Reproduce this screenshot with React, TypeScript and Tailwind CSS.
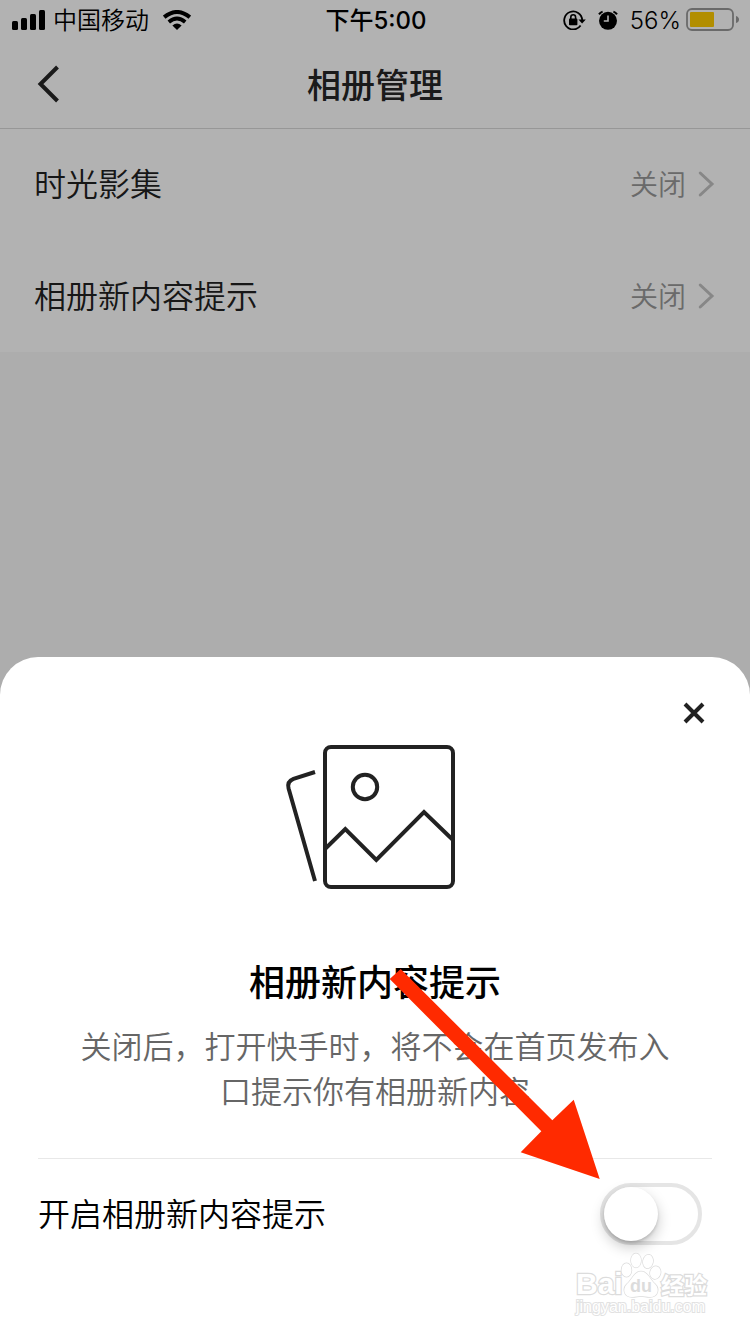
import React, { useState } from 'react';

const cjk = "font-['Noto_Sans_CJK_SC','Noto_Sans',sans-serif]";
const latin = "font-['Inter','Noto_Sans_CJK_SC',sans-serif]";

function SignalIcon() {
  return (
    <svg width="33" height="20" viewBox="0 0 33 20" aria-hidden="true">
      <rect x="0" y="11" width="6" height="9" rx="1.5" />
      <rect x="9" y="8" width="6" height="12" rx="1.5" />
      <rect x="18" y="4" width="6" height="16" rx="1.5" />
      <rect x="27" y="0" width="6" height="20" rx="1.5" />
    </svg>
  );
}

function WifiIcon() {
  return (
    <svg width="28" height="20" viewBox="0 0 28 20" aria-hidden="true">
      <path d="M1.2 7.2 Q14 -3.2 26.8 7.2" fill="none" stroke="#000" strokeWidth="4" />
      <path d="M5.8 12 Q14 5 22.2 12" fill="none" stroke="#000" strokeWidth="3.8" />
      <path d="M9.4 15.6 Q14 11.6 18.6 15.6 L14 20 Z" />
    </svg>
  );
}

function RotationLockIcon() {
  return (
    <svg width="23" height="20" viewBox="0 0 23 20" aria-hidden="true">
      <path d="M17.6 15.6 A9 9 0 1 1 19.2 10" fill="none" stroke="#000" strokeWidth="1.8" />
      <path d="M15.4 9.4 H22.8 L19.1 13.6 Z" />
      <rect x="6" y="8.6" width="8.4" height="6.6" rx="0.8" />
      <path d="M7.8 9 V7.2 A2.4 2.4 0 0 1 12.6 7.2 V9" fill="none" stroke="#000" strokeWidth="1.6" />
    </svg>
  );
}

function AlarmIcon() {
  return (
    <svg width="20" height="20" viewBox="0 0 20 20" aria-hidden="true">
      <circle cx="10" cy="10.8" r="9" />
      <path d="M1 4.4 A7 7 0 0 1 4.6 1.6" fill="none" stroke="#000" strokeWidth="2" />
      <path d="M19 4.4 A7 7 0 0 0 15.4 1.6" fill="none" stroke="#000" strokeWidth="2" />
      <path d="M10 5.4 V11 H5.8" fill="none" stroke="#fff" strokeWidth="1.6" />
    </svg>
  );
}

function BatteryIcon() {
  return (
    <svg width="54" height="24" viewBox="0 0 54 24" aria-hidden="true">
      <rect x="1" y="1" width="46" height="21" rx="5" fill="none" stroke="#999" strokeWidth="1.8" />
      <rect x="4" y="4" width="24" height="15" rx="1" fill="#fc0" />
      <path d="M50 8 Q53 9 53 11.5 Q53 14 50 15 Z" fill="#999" />
    </svg>
  );
}

function StatusBar() {
  return (
    <div className={`grid h-10 grid-cols-[1fr_auto_1fr] items-center pl-3 pr-[10px] text-2xl text-black ${latin}`}>
      <div className="flex items-center">
        <SignalIcon />
        <span className="ml-2 mr-[14px] pt-0.5 font-[350]">中国移动</span>
        <WifiIcon />
      </div>
      <time className="pt-0.5 font-medium">下午5:00</time>
      <div className="flex items-center justify-end">
        <RotationLockIcon />
        <span className="ml-3 flex">
          <AlarmIcon />
        </span>
        <span className="ml-3 mr-[5px] pt-0.5 font-[350]">56%</span>
        <BatteryIcon />
      </div>
    </div>
  );
}

function SettingRow({ label, value }: { label: string; value: string }) {
  return (
    <li>
      <button type="button" className="flex h-28 w-full items-center justify-between pl-[34px] pr-[35px] font-[350]">
        <span className="pb-1 text-[32px] text-[#222]">{label}</span>
        <span className="flex items-center gap-3 text-[28px] text-[#999]">
          <span className="pb-0.5">{value}</span>
          <svg width="17" height="28" viewBox="0 0 17 28" fill="none" aria-hidden="true">
            <path d="M2.2 3 L14 14 L2.2 25" stroke="#c2c2c2" strokeWidth="3" strokeLinecap="round" />
          </svg>
        </span>
      </button>
    </li>
  );
}

function AlbumIllustration() {
  return (
    <svg width="182" height="148" viewBox="0 0 182 148" fill="none" stroke="#222" strokeWidth="4" aria-hidden="true">
      <rect x="41" y="4" width="128" height="140" rx="6" />
      <circle cx="81" cy="44" r="12.2" />
      <path d="M41.5 105.5 L61.3 86 L92.3 117 L140 69 L169.5 97.5" />
      <path d="M31 29 L9.5 35.8 Q2.8 38.4 4.6 45.5 L31 138" />
    </svg>
  );
}

function Watermark() {
  return (
    <svg
      className="absolute bottom-3 right-[36px]"
      width="140"
      height="70"
      viewBox="0 0 140 70"
      fill="#fff"
      stroke="#dcdcdc"
      strokeWidth="1.4"
      paintOrder="stroke"
    >
      <g strokeWidth="2.4" fontWeight="700">
        <text x="2" y="42" fontFamily="Liberation Sans, sans-serif" fontSize="30">Bai</text>
        <text x="87" y="42" fontFamily="Noto Sans CJK SC, sans-serif" fontSize="23">经验</text>
      </g>
      <path d="M67 19.5 C60 19.5 58 28 53 32 C48 37 50 45 58 45 C62 45 64 44 67 44 C70 44 72 45 76 45 C84 45 86 37 81 32 C76 28 74 19.5 67 19.5 Z" />
      <ellipse cx="52.5" cy="18" rx="5" ry="6.8" />
      <ellipse cx="62" cy="8.5" rx="5" ry="7" />
      <ellipse cx="74" cy="9.5" rx="5" ry="6.8" transform="rotate(10 74 9.5)" />
      <ellipse cx="81.5" cy="20.5" rx="5.2" ry="6.4" transform="rotate(15 81 20)" />
      <text x="56" y="40" fontFamily="Liberation Sans, sans-serif" fontSize="18" fontWeight="700" fill="#dcdcdc" stroke="none">du</text>
      <text x="2" y="60" fontFamily="Liberation Sans, sans-serif" fontSize="16" stroke="#e2e2e2" strokeWidth="2">jingyan.baidu.com</text>
    </svg>
  );
}

function Arrow() {
  return (
    <svg
      className="pointer-events-none absolute bottom-[155px] right-[150px]"
      width="211"
      height="210"
      viewBox="0 0 211 210"
      aria-hidden="true"
    >
      <path d="M0.7 10 L11.7 0 L163.3 151.3 L184.7 130.7 L210.7 210 L131.7 183.3 L152.3 162.3 Z" fill="#ff2a00" />
    </svg>
  );
}

export default function App() {
  const [enabled, setEnabled] = useState(false);

  return (
    <div className={`relative flex min-h-screen flex-col bg-[#f8f8f8] ${cjk}`}>
      <header className="bg-white">
        <StatusBar />
        <div className="grid h-[88px] grid-cols-[80px_1fr_80px] items-center">
          <button type="button" aria-label="返回" className="flex h-full items-center pl-[37px]">
            <svg width="24" height="38" viewBox="0 0 24 38" fill="none" aria-hidden="true">
              <path d="M20.5 2 L3.5 19 L20.5 36" stroke="#262626" strokeWidth="4" />
            </svg>
          </button>
          <h1 className="pb-0.5 text-center text-[34px] font-medium text-[#262626]">相册管理</h1>
        </div>
      </header>
      <ul className="bg-white shadow-[inset_0_1px_0_#d8d8d8]">
        <SettingRow label="时光影集" value="关闭" />
        <SettingRow label="相册新内容提示" value="关闭" />
      </ul>

      <div className="absolute inset-0 flex flex-col justify-end bg-black/30">
        <section role="dialog" aria-labelledby="sheet-title" className="relative rounded-t-[38px] bg-white pb-16">
          <div className="flex justify-end pr-8 pt-8">
            <button type="button" aria-label="关闭" className="flex size-12 items-center justify-center">
              <svg width="22" height="22" viewBox="0 0 22 22" aria-hidden="true">
                <path d="M2 2 L20 20 M20 2 L2 20" stroke="#222" strokeWidth="4" />
              </svg>
            </button>
          </div>
          <div className="mt-[6px] flex justify-center">
            <AlbumIllustration />
          </div>
          <h2 id="sheet-title" className="mt-[62px] text-center text-[36px] font-medium leading-[54px] text-black">
            相册新内容提示
          </h2>
          <p className="mt-[15px] px-20 text-center text-[31px] font-[350] leading-[45px] text-[#666]">
            关闭后，打开快手时，将不会在首页发布入口提示你有相册新内容
          </p>
          <div className="mx-[38px] mt-[46px] border-t border-[#e8e8e8] pb-px pr-[10px]">
            <div className="flex h-[110px] items-center justify-between">
              <label htmlFor="new-content" className="pb-1 text-[32px] font-[350] text-black">
                开启相册新内容提示
              </label>
              <input
                id="new-content"
                type="checkbox"
                role="switch"
                checked={enabled}
                onChange={(e) => setEnabled(e.target.checked)}
                className="h-[62px] w-[102px] appearance-none rounded-full border-4 border-[#e5e5e5] bg-white before:block before:size-[54px] before:rounded-full before:bg-white before:shadow-[0_6px_14px_rgba(0,0,0,0.22),0_2px_3px_rgba(0,0,0,0.14)] before:transition-transform before:content-[''] checked:border-[#4cd964] checked:bg-[#4cd964] checked:before:translate-x-10"
              />
            </div>
          </div>
          <Watermark />
          <Arrow />
        </section>
      </div>
    </div>
  );
}
